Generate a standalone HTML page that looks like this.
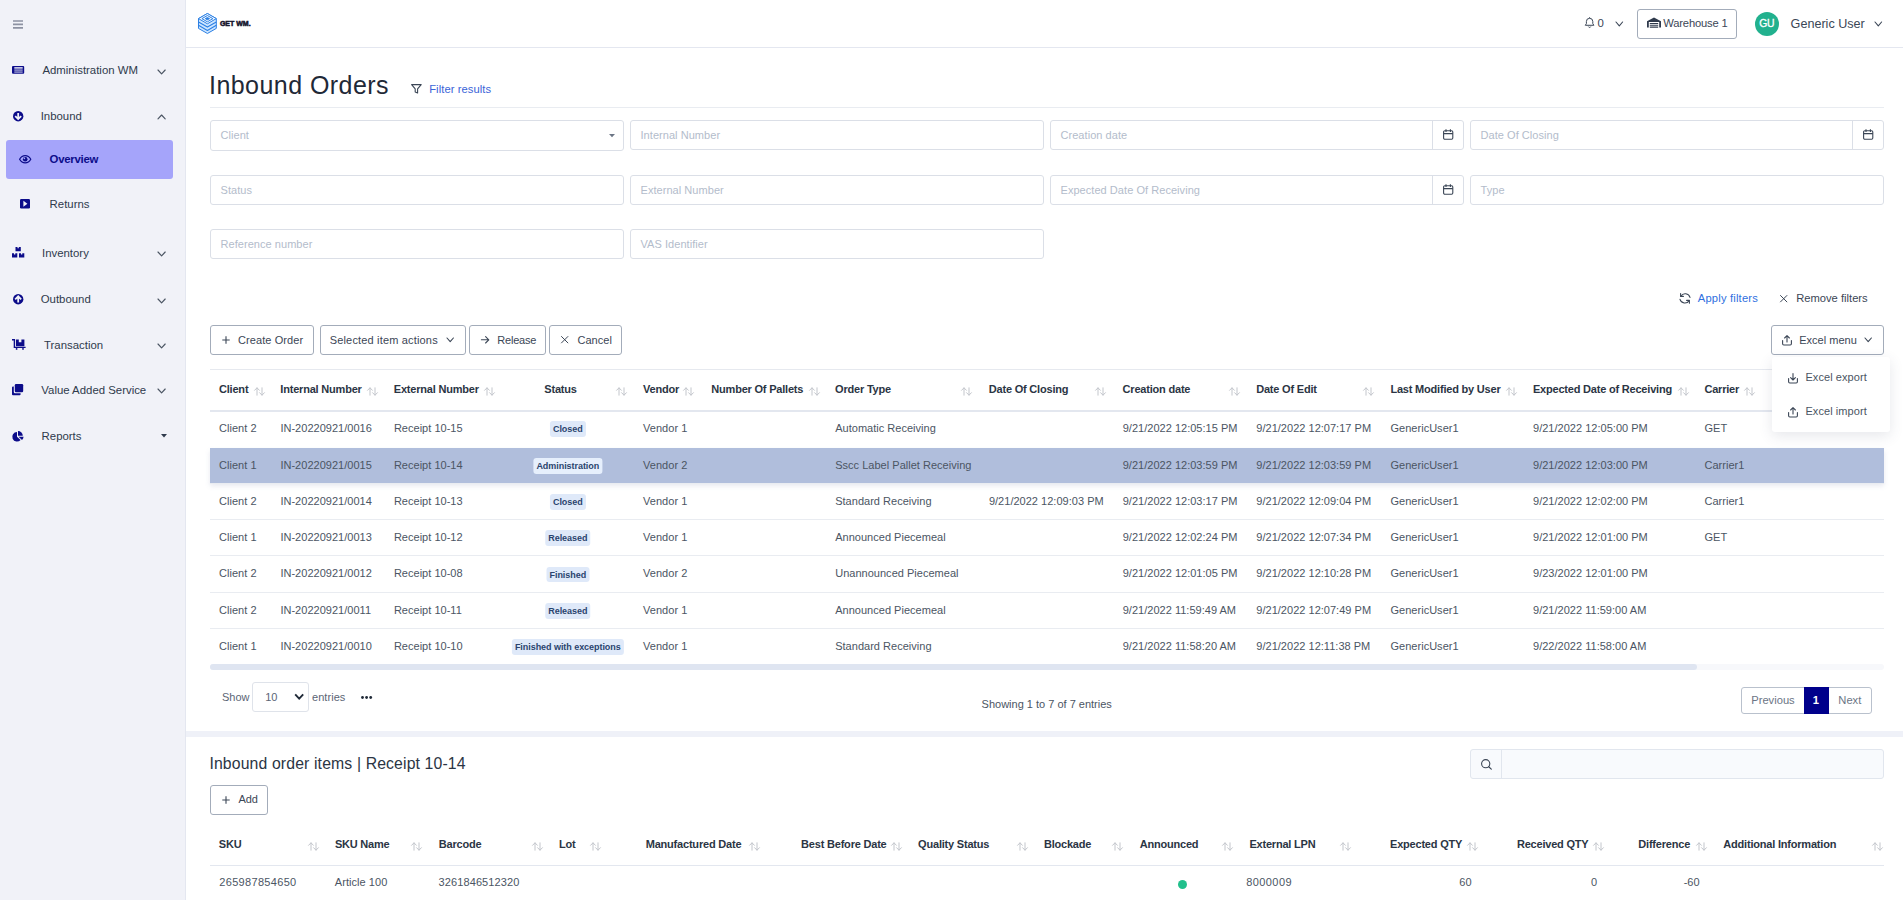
<!DOCTYPE html>
<html lang="en">
<head>
<meta charset="utf-8">
<title>Inbound Orders</title>
<style>
*{box-sizing:border-box;margin:0;padding:0}
html,body{width:1903px;height:900px;overflow:hidden;background:#fff}
body{font-family:"Liberation Sans",sans-serif;font-size:11px;color:#4b5563;position:relative}
.abs{position:absolute}
svg{display:block;overflow:visible}
.t{position:absolute;white-space:pre;line-height:1}
#side{position:absolute;left:0;top:0;width:186px;height:900px;background:#f1f2f8;border-right:1px solid #e4e7f0}
#pill{position:absolute;left:6px;top:140px;width:167px;height:39px;background:#a5a4fa;border-radius:3px}
#top{position:absolute;left:186px;top:0;width:1717px;height:48px;background:#fff;border-bottom:1px solid #e4e7f0}
.inp{position:absolute;border:1px solid #dbdfe7;border-radius:3px;background:#fff}
.inp .ph{position:absolute;left:9.5px;top:9.2px;font-size:11px;line-height:1;color:#b3bccb;white-space:pre;letter-spacing:0.05px}
.inp .cal{position:absolute;right:0;top:0;width:31px;height:28px;border-left:1px solid #dbdfe7}
.btn{position:absolute;border:1px solid #a3acba;border-radius:3px;background:#fff}
.bdg{position:absolute;transform:translateX(-50%);color:#2a446e;font-size:9px;font-weight:700;line-height:16.4px;height:15.5px;padding:0 3.2px;border-radius:3px;white-space:pre;letter-spacing:-0.05px}
</style>
</head>
<body>
<div id="side">
<svg class="abs" style="left:13.00px;top:20.00px;" width="10" height="9" viewBox="0 0 10 9"><g stroke="#8d92a2" stroke-width="1.7"><path d="M0 1 H10 M0 4.4 H10 M0 7.8 H10"/></g></svg>
<div id="pill"></div>
<span class="t" style="top:65.15px;font-size:11.4px;left:42.40px;color:#2f3a4c;">Administration WM</span>
<span class="t" style="top:111.15px;font-size:11.4px;left:40.70px;color:#2f3a4c;">Inbound</span>
<span class="t" style="top:198.85px;font-size:11.4px;left:49.60px;color:#2f3a4c;">Returns</span>
<span class="t" style="top:247.85px;font-size:11.4px;left:42.00px;color:#2f3a4c;">Inventory</span>
<span class="t" style="top:294.15px;font-size:11.4px;left:40.70px;color:#2f3a4c;">Outbound</span>
<span class="t" style="top:340.15px;font-size:11.4px;left:44.00px;color:#2f3a4c;">Transaction</span>
<span class="t" style="top:385.15px;font-size:11.4px;left:41.30px;color:#2f3a4c;">Value Added Service</span>
<span class="t" style="top:431.15px;font-size:11.4px;left:41.60px;color:#2f3a4c;">Reports</span>
<span class="t" style="top:153.65px;font-size:11.4px;left:49.60px;color:#0c0c8a;font-weight:700;letter-spacing:-0.28px;">Overview</span>
<svg class="abs" style="left:156.60px;top:68.50px;" width="9.2" height="5.9" viewBox="0 0 9.2 5.9"><path d="M1 1 L4.60 4.90 L8.20 1" fill="none" stroke="#4b5563" stroke-width="1.15" stroke-linecap="round" stroke-linejoin="round"/></svg>
<svg class="abs" style="left:156.60px;top:251.00px;" width="9.2" height="5.9" viewBox="0 0 9.2 5.9"><path d="M1 1 L4.60 4.90 L8.20 1" fill="none" stroke="#4b5563" stroke-width="1.15" stroke-linecap="round" stroke-linejoin="round"/></svg>
<svg class="abs" style="left:156.60px;top:297.50px;" width="9.2" height="5.9" viewBox="0 0 9.2 5.9"><path d="M1 1 L4.60 4.90 L8.20 1" fill="none" stroke="#4b5563" stroke-width="1.15" stroke-linecap="round" stroke-linejoin="round"/></svg>
<svg class="abs" style="left:156.60px;top:343.30px;" width="9.2" height="5.9" viewBox="0 0 9.2 5.9"><path d="M1 1 L4.60 4.90 L8.20 1" fill="none" stroke="#4b5563" stroke-width="1.15" stroke-linecap="round" stroke-linejoin="round"/></svg>
<svg class="abs" style="left:156.60px;top:388.10px;" width="9.2" height="5.9" viewBox="0 0 9.2 5.9"><path d="M1 1 L4.60 4.90 L8.20 1" fill="none" stroke="#4b5563" stroke-width="1.15" stroke-linecap="round" stroke-linejoin="round"/></svg>
<svg class="abs" style="left:156.60px;top:114.10px;" width="9.2" height="5.9" viewBox="0 0 9.2 5.9"><path d="M1 4.90 L4.60 1 L8.20 4.90" fill="none" stroke="#4b5563" stroke-width="1.15" stroke-linecap="round" stroke-linejoin="round"/></svg>
<svg class="abs" style="left:161.00px;top:434.30px;" width="6" height="3.5" viewBox="0 0 6 3.5"><path d="M0 0 H6 L3 3.5 Z" fill="#2f3a4c"/></svg>
<svg class="abs" style="left:12.20px;top:66.00px;" width="12.2" height="7.8" viewBox="0 0 12.2 7.8"><rect x="0" y="0" width="12.2" height="7.8" rx="1" fill="#0c0c8a"/><g fill="#f1f2f8"><rect x="2.3" y="1.2" width="8.4" height="1.4"/><rect x="2.3" y="3.6" width="8.4" height="0.9"/><rect x="2.3" y="5.6" width="8.4" height="0.9"/></g></svg>
<svg class="abs" style="left:12.50px;top:110.70px;" width="10.4" height="10.4" viewBox="0 0 10.4 10.4"><circle cx="5.2" cy="5.2" r="5.2" fill="#0c0c8a"/><path d="M5.2 2 V7.8 M2.2 5.1 L5.2 8.1 L8.2 5.1" fill="none" stroke="#f1f2f8" stroke-width="1.8" stroke-linejoin="miter"/></svg>
<svg class="abs" style="left:19.00px;top:154.80px;" width="12.4" height="8.4" viewBox="0 0 12.4 8.4"><path d="M0.6 4.2 C2.2 1.4 4 0.6 6.2 0.6 C8.4 0.6 10.2 1.4 11.8 4.2 C10.2 7 8.4 7.8 6.2 7.8 C4 7.8 2.2 7 0.6 4.2 Z" fill="none" stroke="#0c0c8a" stroke-width="1.2"/><circle cx="6.2" cy="4.2" r="2.3" fill="#0c0c8a"/><circle cx="5.4" cy="3.4" r="0.8" fill="#a5a4fa"/></svg>
<svg class="abs" style="left:20.00px;top:199.00px;" width="10" height="9.4" viewBox="0 0 10 9.4"><rect width="10" height="9.4" rx="1.2" fill="#0c0c8a"/><path d="M3.4 1.7 L7.4 4.7 L3.4 7.7 Z" fill="#f1f2f8"/></svg>
<svg class="abs" style="left:12.20px;top:247.40px;" width="12.4" height="10.6" viewBox="0 0 12.4 10.6"><path d="M3.5 0 H5.50 V1.30 H6.80 V0 H8.8 V4.2 H3.5 Z" fill="#0c0c8a"/><path d="M0 6.3 H2.00 V7.60 H3.30 V6.3 H5.3 V10.5 H0 Z" fill="#0c0c8a"/><path d="M7 6.3 H9.00 V7.60 H10.30 V6.3 H12.3 V10.5 H7 Z" fill="#0c0c8a"/></svg>
<svg class="abs" style="left:12.50px;top:293.50px;" width="10.4" height="10.4" viewBox="0 0 10.4 10.4"><circle cx="5.2" cy="5.2" r="5.2" fill="#0c0c8a"/><path d="M5.2 8.4 V2.6 M2.2 5.3 L5.2 2.3 L8.2 5.3" fill="none" stroke="#f1f2f8" stroke-width="1.8"/></svg>
<svg class="abs" style="left:12.30px;top:339.30px;" width="13.8" height="10.8" viewBox="0 0 13.8 10.8"><path d="M0 0.7 H2.4 V8.4 H13.6" fill="none" stroke="#0c0c8a" stroke-width="1.4"/><path d="M4 0.6 H6.8 V3.2 H9.4 V0.6 H12.4 V7.2 H4 Z" fill="#0c0c8a"/><circle cx="4.6" cy="9.9" r="0.9" fill="#0c0c8a"/><circle cx="11" cy="9.9" r="0.9" fill="#0c0c8a"/></svg>
<svg class="abs" style="left:12.00px;top:384.00px;" width="11.2" height="11.4" viewBox="0 0 11.2 11.4"><rect x="2.8" y="0" width="8.4" height="8.2" rx="1.2" fill="#0c0c8a"/><path d="M0 3.6 Q0 2.6 1 2.6 H1.8 V8 Q1.8 9.2 3 9.2 H8.6 V10.2 Q8.6 11.2 7.6 11.2 H1 Q0 11.2 0 10.2 Z" fill="#0c0c8a"/></svg>
<svg class="abs" style="left:12.00px;top:430.60px;" width="11.8" height="10.6" viewBox="0 0 11.8 10.6"><path d="M5 1 A4.8 4.8 0 1 0 8.6 9 L5 5.8 Z" fill="#0c0c8a"/><path d="M6 0 A4.8 4.8 0 0 1 10.8 4.8 H6 Z" fill="#0c0c8a"/><path d="M6.6 5.8 H11.6 A4.8 4.8 0 0 1 10 9 Z" fill="#0c0c8a"/></svg>
</div>
<div id="top"></div>
<svg class="abs" style="left:198.00px;top:13.00px;" width="18.8" height="21" viewBox="0 0 18.8 21"><g fill="none" stroke="#2b7fe4" stroke-width="1" stroke-linejoin="round"><path d="M9.4 0.5 L18.3 5.6 V15.4 L9.4 20.5 L0.5 15.4 V5.6 Z" fill="#cde6ff"/><path d="M9.4 0.5 L18.3 5.6 L9.4 10.8 L0.5 5.6 Z" fill="#f4faff"/><path d="M9.4 2.5 L14.9 5.65 L9.4 8.8 L3.9 5.65 Z"/><path d="M9.4 4.5 L11.5 5.65 L9.4 6.8 L7.3 5.65 Z" fill="#2b7fe4"/><path d="M0.5 9 L9.4 14.1 L18.3 9 M0.5 12.3 L9.4 17.4 L18.3 12.3" stroke-width="1.1"/></g></svg>
<span class="t" style="top:20.17px;font-size:7.0px;left:219.90px;color:#14142b;font-weight:700;letter-spacing:0.0px;-webkit-text-stroke:0.5px #14142b;">GET WM.</span>
<svg class="abs" style="left:1585.30px;top:17.40px;" width="9.2" height="11" viewBox="0 0 9.2 11"><path d="M4.6 1.3 A3.2 3.2 0 0 1 7.8 4.5 V6.6 L8.9 8.3 H0.3 L1.4 6.6 V4.5 A3.2 3.2 0 0 1 4.6 1.3 Z" fill="none" stroke="#3b4656" stroke-width="1"/><path d="M4.6 0.2 V1.3 M3.4 9.6 A1.3 1.3 0 0 0 5.8 9.6" fill="none" stroke="#3b4656" stroke-width="1"/></svg>
<span class="t" style="top:17.55px;font-size:11.4px;left:1597.60px;color:#3b4656;">0</span>
<svg class="abs" style="left:1614.80px;top:21.20px;" width="8.6" height="5.8" viewBox="0 0 8.6 5.8"><path d="M1 1 L4.30 4.80 L7.60 1" fill="none" stroke="#3b4656" stroke-width="1.1" stroke-linecap="round" stroke-linejoin="round"/></svg>
<div class="btn" style="left:1637px;top:9px;width:100px;height:30px"></div>
<svg class="abs" style="left:1647.00px;top:17.40px;" width="14" height="10.8" viewBox="0 0 14 10.8"><path d="M0 4.2 L7 0.6 L14 4.2 V10.6 H12.2 V5 H1.8 V10.6 H0 Z" fill="#2f3a4c"/><path d="M2.8 6.5 H11.2 M2.8 8.3 H11.2 M2.8 10.1 H11.2" stroke="#2f3a4c" stroke-width="1.1"/></svg>
<span class="t" style="top:17.72px;font-size:11.2px;left:1663.20px;color:#3b4656;letter-spacing:-0.15px;">Warehouse 1</span>
<div class="abs" style="left:1755px;top:12px;width:24px;height:24px;border-radius:12px;background:#22b18e"></div>
<span class="t" style="top:18.90px;font-size:10.4px;left:1759.30px;color:#fff;font-weight:400;letter-spacing:-0.3px;-webkit-text-stroke:0.3px #fff;">GU</span>
<span class="t" style="top:18.13px;font-size:12.6px;left:1790.60px;color:#3b4656;">Generic User</span>
<svg class="abs" style="left:1873.80px;top:21.20px;" width="8.6" height="5.8" viewBox="0 0 8.6 5.8"><path d="M1 1 L4.30 4.80 L7.60 1" fill="none" stroke="#3b4656" stroke-width="1.1" stroke-linecap="round" stroke-linejoin="round"/></svg>
<span class="t" style="top:73.24px;font-size:25px;left:209.00px;color:#1f2937;letter-spacing:0.45px;">Inbound Orders</span>
<svg class="abs" style="left:411.40px;top:84.20px;" width="10.8" height="9.8" viewBox="0 0 10.8 9.8"><path d="M0.6 0.6 H10.2 L6.6 4.9 V9 L4.2 8 V4.9 Z" fill="none" stroke="#3b4656" stroke-width="1.1" stroke-linejoin="round"/></svg>
<span class="t" style="top:83.72px;font-size:11.2px;left:429.20px;color:#3a64d8;letter-spacing:0.07px;">Filter results</span>
<div class="abs" style="left:210px;top:107px;width:1674px;height:1px;background:#e9ecf1"></div>
<div class="inp" style="left:210px;top:120px;width:414px;height:31px"><span class="ph">Client</span></div>
<svg class="abs" style="left:608.60px;top:134.00px;" width="6" height="3.2" viewBox="0 0 6 3.2"><path d="M0 0 H6 L3 3.2 Z" fill="#6b7585"/></svg>
<div class="inp" style="left:630px;top:120px;width:414px;height:30px"><span class="ph">Internal Number</span></div>
<div class="inp" style="left:1050px;top:120px;width:414px;height:30px"><span class="ph">Creation date</span><div class="cal"></div></div>
<svg class="abs" style="left:1442.80px;top:129.00px;" width="10.4" height="10.8" viewBox="0 0 10.4 10.8"><g fill="none" stroke="#3b4656" stroke-width="1.1"><rect x="0.6" y="1.8" width="9.2" height="8.4" rx="1.2"/><path d="M0.6 4.6 H9.8 M3 0.3 V3 M7.4 0.3 V3"/></g></svg>
<div class="inp" style="left:1470px;top:120px;width:414px;height:30px"><span class="ph">Date Of Closing</span><div class="cal"></div></div>
<svg class="abs" style="left:1862.80px;top:129.00px;" width="10.4" height="10.8" viewBox="0 0 10.4 10.8"><g fill="none" stroke="#3b4656" stroke-width="1.1"><rect x="0.6" y="1.8" width="9.2" height="8.4" rx="1.2"/><path d="M0.6 4.6 H9.8 M3 0.3 V3 M7.4 0.3 V3"/></g></svg>
<div class="inp" style="left:210px;top:175px;width:414px;height:30px"><span class="ph">Status</span></div>
<div class="inp" style="left:630px;top:175px;width:414px;height:30px"><span class="ph">External Number</span></div>
<div class="inp" style="left:1050px;top:175px;width:414px;height:30px"><span class="ph">Expected Date Of Receiving</span><div class="cal"></div></div>
<svg class="abs" style="left:1442.80px;top:184.00px;" width="10.4" height="10.8" viewBox="0 0 10.4 10.8"><g fill="none" stroke="#3b4656" stroke-width="1.1"><rect x="0.6" y="1.8" width="9.2" height="8.4" rx="1.2"/><path d="M0.6 4.6 H9.8 M3 0.3 V3 M7.4 0.3 V3"/></g></svg>
<div class="inp" style="left:1470px;top:175px;width:414px;height:30px"><span class="ph">Type</span></div>
<div class="inp" style="left:210px;top:229px;width:414px;height:30px"><span class="ph">Reference number</span></div>
<div class="inp" style="left:630px;top:229px;width:414px;height:30px"><span class="ph">VAS Identifier</span></div>
<svg class="abs" style="left:1679.00px;top:292.80px;" width="12" height="10.8" viewBox="0 0 12 10.8"><g fill="none" stroke="#3b4656" stroke-width="1.1" stroke-linecap="round" stroke-linejoin="round"><path d="M11 4.4 A5 5 0 0 0 1.9 3.2 M1 6.4 A5 5 0 0 0 10.1 7.6"/><path d="M1.6 0.6 V3.4 H4.4 M10.4 10.2 V7.4 H7.6"/></g></svg>
<span class="t" style="top:292.72px;font-size:11.2px;left:1697.80px;color:#2f6fe0;letter-spacing:0.18px;">Apply filters</span>
<svg class="abs" style="left:1780.40px;top:294.70px;" width="7.4" height="7.4" viewBox="0 0 7.4 7.4"><path d="M0.5 0.5 L6.9 6.9 M6.9 0.5 L0.5 6.9" stroke="#3b4656" stroke-width="1" stroke-linecap="round"/></svg>
<span class="t" style="top:292.72px;font-size:11.2px;left:1796.20px;color:#3b4656;letter-spacing:0.0px;">Remove filters</span>
<div class="btn" style="left:210px;top:325px;width:104px;height:30px"></div>
<svg class="abs" style="left:222.00px;top:336.00px;" width="8" height="8" viewBox="0 0 8 8"><path d="M4 0.3 V7.7 M0.3 4 H7.7" stroke="#3b4656" stroke-width="1.1"/></svg>
<span class="t" style="top:334.99px;font-size:11px;left:237.90px;color:#3b4656;letter-spacing:0.1px;">Create Order</span>
<div class="btn" style="left:320px;top:325px;width:146px;height:30px"></div>
<span class="t" style="top:334.99px;font-size:11px;left:329.70px;color:#3b4656;letter-spacing:0.17px;">Selected item actions</span>
<svg class="abs" style="left:445.70px;top:337.10px;" width="8.4" height="5.7" viewBox="0 0 8.4 5.7"><path d="M1 1 L4.20 4.70 L7.40 1" fill="none" stroke="#3b4656" stroke-width="1.1" stroke-linecap="round" stroke-linejoin="round"/></svg>
<div class="btn" style="left:469px;top:325px;width:77px;height:30px"></div>
<svg class="abs" style="left:481.00px;top:336.20px;" width="8.4" height="7.6" viewBox="0 0 8.4 7.6"><path d="M0.4 3.8 H7.8 M4.6 0.6 L7.8 3.8 L4.6 7" fill="none" stroke="#3b4656" stroke-width="1.1" stroke-linecap="round" stroke-linejoin="round"/></svg>
<span class="t" style="top:334.99px;font-size:11px;left:497.30px;color:#3b4656;letter-spacing:-0.2px;">Release</span>
<div class="btn" style="left:549px;top:325px;width:73px;height:30px"></div>
<svg class="abs" style="left:561.40px;top:336.30px;" width="7.4" height="7.4" viewBox="0 0 7.4 7.4"><path d="M0.5 0.5 L6.9 6.9 M6.9 0.5 L0.5 6.9" stroke="#3b4656" stroke-width="1" stroke-linecap="round"/></svg>
<span class="t" style="top:334.99px;font-size:11px;left:577.50px;color:#3b4656;letter-spacing:0.03px;">Cancel</span>
<div class="abs" style="left:210px;top:369px;width:1674px;height:1px;background:#e6e9ef"></div>
<div class="abs" style="left:210px;top:410px;width:1674px;height:2px;background:#e3e7ef"></div>
<span class="t" style="top:383.89px;font-size:11px;left:219.00px;color:#2b3544;font-weight:700;letter-spacing:-0.2px;">Client</span>
<svg class="abs" style="left:253.60px;top:386.60px;" width="11" height="9" viewBox="0 0 11 9"><g fill="none" stroke="#c3c6cc" stroke-width="1" stroke-linecap="round" stroke-linejoin="round"><path d="M3 8.2 V0.9 M0.6 3.3 L3 0.8 L5.4 3.3"/><path d="M8 0.8 V8.1 M5.6 5.7 L8 8.2 L10.4 5.7"/></g></svg>
<span class="t" style="top:383.89px;font-size:11px;left:280.30px;color:#2b3544;font-weight:700;letter-spacing:-0.2px;">Internal Number</span>
<svg class="abs" style="left:367.20px;top:386.60px;" width="11" height="9" viewBox="0 0 11 9"><g fill="none" stroke="#c3c6cc" stroke-width="1" stroke-linecap="round" stroke-linejoin="round"><path d="M3 8.2 V0.9 M0.6 3.3 L3 0.8 L5.4 3.3"/><path d="M8 0.8 V8.1 M5.6 5.7 L8 8.2 L10.4 5.7"/></g></svg>
<span class="t" style="top:383.89px;font-size:11px;left:393.80px;color:#2b3544;font-weight:700;letter-spacing:-0.2px;">External Number</span>
<svg class="abs" style="left:483.60px;top:386.60px;" width="11" height="9" viewBox="0 0 11 9"><g fill="none" stroke="#c3c6cc" stroke-width="1" stroke-linecap="round" stroke-linejoin="round"><path d="M3 8.2 V0.9 M0.6 3.3 L3 0.8 L5.4 3.3"/><path d="M8 0.8 V8.1 M5.6 5.7 L8 8.2 L10.4 5.7"/></g></svg>
<span class="t" style="top:383.89px;font-size:11px;left:544.30px;color:#2b3544;font-weight:700;letter-spacing:-0.2px;">Status</span>
<svg class="abs" style="left:615.80px;top:386.60px;" width="11" height="9" viewBox="0 0 11 9"><g fill="none" stroke="#c3c6cc" stroke-width="1" stroke-linecap="round" stroke-linejoin="round"><path d="M3 8.2 V0.9 M0.6 3.3 L3 0.8 L5.4 3.3"/><path d="M8 0.8 V8.1 M5.6 5.7 L8 8.2 L10.4 5.7"/></g></svg>
<span class="t" style="top:383.89px;font-size:11px;left:643.00px;color:#2b3544;font-weight:700;letter-spacing:-0.2px;">Vendor</span>
<svg class="abs" style="left:683.20px;top:386.60px;" width="11" height="9" viewBox="0 0 11 9"><g fill="none" stroke="#c3c6cc" stroke-width="1" stroke-linecap="round" stroke-linejoin="round"><path d="M3 8.2 V0.9 M0.6 3.3 L3 0.8 L5.4 3.3"/><path d="M8 0.8 V8.1 M5.6 5.7 L8 8.2 L10.4 5.7"/></g></svg>
<span class="t" style="top:383.89px;font-size:11px;left:711.30px;color:#2b3544;font-weight:700;letter-spacing:-0.2px;">Number Of Pallets</span>
<svg class="abs" style="left:808.60px;top:386.60px;" width="11" height="9" viewBox="0 0 11 9"><g fill="none" stroke="#c3c6cc" stroke-width="1" stroke-linecap="round" stroke-linejoin="round"><path d="M3 8.2 V0.9 M0.6 3.3 L3 0.8 L5.4 3.3"/><path d="M8 0.8 V8.1 M5.6 5.7 L8 8.2 L10.4 5.7"/></g></svg>
<span class="t" style="top:383.89px;font-size:11px;left:835.10px;color:#2b3544;font-weight:700;letter-spacing:-0.2px;">Order Type</span>
<svg class="abs" style="left:961.20px;top:386.60px;" width="11" height="9" viewBox="0 0 11 9"><g fill="none" stroke="#c3c6cc" stroke-width="1" stroke-linecap="round" stroke-linejoin="round"><path d="M3 8.2 V0.9 M0.6 3.3 L3 0.8 L5.4 3.3"/><path d="M8 0.8 V8.1 M5.6 5.7 L8 8.2 L10.4 5.7"/></g></svg>
<span class="t" style="top:383.89px;font-size:11px;left:988.80px;color:#2b3544;font-weight:700;letter-spacing:-0.2px;">Date Of Closing</span>
<svg class="abs" style="left:1095.20px;top:386.60px;" width="11" height="9" viewBox="0 0 11 9"><g fill="none" stroke="#c3c6cc" stroke-width="1" stroke-linecap="round" stroke-linejoin="round"><path d="M3 8.2 V0.9 M0.6 3.3 L3 0.8 L5.4 3.3"/><path d="M8 0.8 V8.1 M5.6 5.7 L8 8.2 L10.4 5.7"/></g></svg>
<span class="t" style="top:383.89px;font-size:11px;left:1122.60px;color:#2b3544;font-weight:700;letter-spacing:-0.2px;">Creation date</span>
<svg class="abs" style="left:1228.80px;top:386.60px;" width="11" height="9" viewBox="0 0 11 9"><g fill="none" stroke="#c3c6cc" stroke-width="1" stroke-linecap="round" stroke-linejoin="round"><path d="M3 8.2 V0.9 M0.6 3.3 L3 0.8 L5.4 3.3"/><path d="M8 0.8 V8.1 M5.6 5.7 L8 8.2 L10.4 5.7"/></g></svg>
<span class="t" style="top:383.89px;font-size:11px;left:1256.20px;color:#2b3544;font-weight:700;letter-spacing:-0.2px;">Date Of Edit</span>
<svg class="abs" style="left:1362.60px;top:386.60px;" width="11" height="9" viewBox="0 0 11 9"><g fill="none" stroke="#c3c6cc" stroke-width="1" stroke-linecap="round" stroke-linejoin="round"><path d="M3 8.2 V0.9 M0.6 3.3 L3 0.8 L5.4 3.3"/><path d="M8 0.8 V8.1 M5.6 5.7 L8 8.2 L10.4 5.7"/></g></svg>
<span class="t" style="top:383.89px;font-size:11px;left:1390.40px;color:#2b3544;font-weight:700;letter-spacing:-0.2px;">Last Modified by User</span>
<svg class="abs" style="left:1506.00px;top:386.60px;" width="11" height="9" viewBox="0 0 11 9"><g fill="none" stroke="#c3c6cc" stroke-width="1" stroke-linecap="round" stroke-linejoin="round"><path d="M3 8.2 V0.9 M0.6 3.3 L3 0.8 L5.4 3.3"/><path d="M8 0.8 V8.1 M5.6 5.7 L8 8.2 L10.4 5.7"/></g></svg>
<span class="t" style="top:383.89px;font-size:11px;left:1532.90px;color:#2b3544;font-weight:700;letter-spacing:-0.2px;">Expected Date of Receiving</span>
<svg class="abs" style="left:1677.60px;top:386.60px;" width="11" height="9" viewBox="0 0 11 9"><g fill="none" stroke="#c3c6cc" stroke-width="1" stroke-linecap="round" stroke-linejoin="round"><path d="M3 8.2 V0.9 M0.6 3.3 L3 0.8 L5.4 3.3"/><path d="M8 0.8 V8.1 M5.6 5.7 L8 8.2 L10.4 5.7"/></g></svg>
<span class="t" style="top:383.89px;font-size:11px;left:1704.40px;color:#2b3544;font-weight:700;letter-spacing:-0.2px;">Carrier</span>
<svg class="abs" style="left:1743.60px;top:386.60px;" width="11" height="9" viewBox="0 0 11 9"><g fill="none" stroke="#c3c6cc" stroke-width="1" stroke-linecap="round" stroke-linejoin="round"><path d="M3 8.2 V0.9 M0.6 3.3 L3 0.8 L5.4 3.3"/><path d="M8 0.8 V8.1 M5.6 5.7 L8 8.2 L10.4 5.7"/></g></svg>
<span class="t" style="top:422.99px;font-size:11px;left:219.10px;color:#4b5563;letter-spacing:0.02px;">Client 2</span>
<span class="t" style="top:422.99px;font-size:11px;left:280.40px;color:#4b5563;letter-spacing:0.02px;">IN-20220921/0016</span>
<span class="t" style="top:422.99px;font-size:11px;left:393.90px;color:#4b5563;letter-spacing:0.02px;">Receipt 10-15</span>
<span class="bdg" style="left:567.8px;top:421.40px;background:#dfe9f9">Closed</span>
<span class="t" style="top:422.99px;font-size:11px;left:643.10px;color:#4b5563;letter-spacing:0.02px;">Vendor 1</span>
<span class="t" style="top:422.99px;font-size:11px;left:835.20px;color:#4b5563;letter-spacing:0.02px;">Automatic Receiving</span>
<span class="t" style="top:422.99px;font-size:11px;left:1122.70px;color:#4b5563;letter-spacing:0.02px;">9/21/2022 12:05:15 PM</span>
<span class="t" style="top:422.99px;font-size:11px;left:1256.30px;color:#4b5563;letter-spacing:0.02px;">9/21/2022 12:07:17 PM</span>
<span class="t" style="top:422.99px;font-size:11px;left:1390.50px;color:#4b5563;letter-spacing:0.02px;">GenericUser1</span>
<span class="t" style="top:422.99px;font-size:11px;left:1533.00px;color:#4b5563;letter-spacing:0.02px;">9/21/2022 12:05:00 PM</span>
<span class="t" style="top:422.99px;font-size:11px;left:1704.50px;color:#4b5563;letter-spacing:0.02px;">GET</span>
<div class="abs" style="left:210px;top:447.5px;width:1674px;height:35.5px;background:#b0bedc;box-shadow:0 3px 5px rgba(120,135,170,0.18)"></div>
<span class="t" style="top:459.69px;font-size:11px;left:219.10px;color:#4b5563;letter-spacing:0.02px;">Client 1</span>
<span class="t" style="top:459.69px;font-size:11px;left:280.40px;color:#4b5563;letter-spacing:0.02px;">IN-20220921/0015</span>
<span class="t" style="top:459.69px;font-size:11px;left:393.90px;color:#4b5563;letter-spacing:0.02px;">Receipt 10-14</span>
<span class="bdg" style="left:567.8px;top:458.10px;background:#e6effc">Administration</span>
<span class="t" style="top:459.69px;font-size:11px;left:643.10px;color:#4b5563;letter-spacing:0.02px;">Vendor 2</span>
<span class="t" style="top:459.69px;font-size:11px;left:835.20px;color:#4b5563;letter-spacing:0.02px;">Sscc Label Pallet Receiving</span>
<span class="t" style="top:459.69px;font-size:11px;left:1122.70px;color:#4b5563;letter-spacing:0.02px;">9/21/2022 12:03:59 PM</span>
<span class="t" style="top:459.69px;font-size:11px;left:1256.30px;color:#4b5563;letter-spacing:0.02px;">9/21/2022 12:03:59 PM</span>
<span class="t" style="top:459.69px;font-size:11px;left:1390.50px;color:#4b5563;letter-spacing:0.02px;">GenericUser1</span>
<span class="t" style="top:459.69px;font-size:11px;left:1533.00px;color:#4b5563;letter-spacing:0.02px;">9/21/2022 12:03:00 PM</span>
<span class="t" style="top:459.69px;font-size:11px;left:1704.50px;color:#4b5563;letter-spacing:0.02px;">Carrier1</span>
<div class="abs" style="left:210px;top:482.50px;width:1674px;height:1px;background:#e9ecf1"></div>
<span class="t" style="top:495.89px;font-size:11px;left:219.10px;color:#4b5563;letter-spacing:0.02px;">Client 2</span>
<span class="t" style="top:495.89px;font-size:11px;left:280.40px;color:#4b5563;letter-spacing:0.02px;">IN-20220921/0014</span>
<span class="t" style="top:495.89px;font-size:11px;left:393.90px;color:#4b5563;letter-spacing:0.02px;">Receipt 10-13</span>
<span class="bdg" style="left:567.8px;top:494.30px;background:#dfe9f9">Closed</span>
<span class="t" style="top:495.89px;font-size:11px;left:643.10px;color:#4b5563;letter-spacing:0.02px;">Vendor 1</span>
<span class="t" style="top:495.89px;font-size:11px;left:835.20px;color:#4b5563;letter-spacing:0.02px;">Standard Receiving</span>
<span class="t" style="top:495.89px;font-size:11px;left:988.90px;color:#4b5563;letter-spacing:0.02px;">9/21/2022 12:09:03 PM</span>
<span class="t" style="top:495.89px;font-size:11px;left:1122.70px;color:#4b5563;letter-spacing:0.02px;">9/21/2022 12:03:17 PM</span>
<span class="t" style="top:495.89px;font-size:11px;left:1256.30px;color:#4b5563;letter-spacing:0.02px;">9/21/2022 12:09:04 PM</span>
<span class="t" style="top:495.89px;font-size:11px;left:1390.50px;color:#4b5563;letter-spacing:0.02px;">GenericUser1</span>
<span class="t" style="top:495.89px;font-size:11px;left:1533.00px;color:#4b5563;letter-spacing:0.02px;">9/21/2022 12:02:00 PM</span>
<span class="t" style="top:495.89px;font-size:11px;left:1704.50px;color:#4b5563;letter-spacing:0.02px;">Carrier1</span>
<div class="abs" style="left:210px;top:518.90px;width:1674px;height:1px;background:#e9ecf1"></div>
<span class="t" style="top:531.89px;font-size:11px;left:219.10px;color:#4b5563;letter-spacing:0.02px;">Client 1</span>
<span class="t" style="top:531.89px;font-size:11px;left:280.40px;color:#4b5563;letter-spacing:0.02px;">IN-20220921/0013</span>
<span class="t" style="top:531.89px;font-size:11px;left:393.90px;color:#4b5563;letter-spacing:0.02px;">Receipt 10-12</span>
<span class="bdg" style="left:567.8px;top:530.30px;background:#dfe9f9">Released</span>
<span class="t" style="top:531.89px;font-size:11px;left:643.10px;color:#4b5563;letter-spacing:0.02px;">Vendor 1</span>
<span class="t" style="top:531.89px;font-size:11px;left:835.20px;color:#4b5563;letter-spacing:0.02px;">Announced Piecemeal</span>
<span class="t" style="top:531.89px;font-size:11px;left:1122.70px;color:#4b5563;letter-spacing:0.02px;">9/21/2022 12:02:24 PM</span>
<span class="t" style="top:531.89px;font-size:11px;left:1256.30px;color:#4b5563;letter-spacing:0.02px;">9/21/2022 12:07:34 PM</span>
<span class="t" style="top:531.89px;font-size:11px;left:1390.50px;color:#4b5563;letter-spacing:0.02px;">GenericUser1</span>
<span class="t" style="top:531.89px;font-size:11px;left:1533.00px;color:#4b5563;letter-spacing:0.02px;">9/21/2022 12:01:00 PM</span>
<span class="t" style="top:531.89px;font-size:11px;left:1704.50px;color:#4b5563;letter-spacing:0.02px;">GET</span>
<div class="abs" style="left:210px;top:555.30px;width:1674px;height:1px;background:#e9ecf1"></div>
<span class="t" style="top:568.09px;font-size:11px;left:219.10px;color:#4b5563;letter-spacing:0.02px;">Client 2</span>
<span class="t" style="top:568.09px;font-size:11px;left:280.40px;color:#4b5563;letter-spacing:0.02px;">IN-20220921/0012</span>
<span class="t" style="top:568.09px;font-size:11px;left:393.90px;color:#4b5563;letter-spacing:0.02px;">Receipt 10-08</span>
<span class="bdg" style="left:567.8px;top:566.50px;background:#dfe9f9">Finished</span>
<span class="t" style="top:568.09px;font-size:11px;left:643.10px;color:#4b5563;letter-spacing:0.02px;">Vendor 2</span>
<span class="t" style="top:568.09px;font-size:11px;left:835.20px;color:#4b5563;letter-spacing:0.02px;">Unannounced Piecemeal</span>
<span class="t" style="top:568.09px;font-size:11px;left:1122.70px;color:#4b5563;letter-spacing:0.02px;">9/21/2022 12:01:05 PM</span>
<span class="t" style="top:568.09px;font-size:11px;left:1256.30px;color:#4b5563;letter-spacing:0.02px;">9/21/2022 12:10:28 PM</span>
<span class="t" style="top:568.09px;font-size:11px;left:1390.50px;color:#4b5563;letter-spacing:0.02px;">GenericUser1</span>
<span class="t" style="top:568.09px;font-size:11px;left:1533.00px;color:#4b5563;letter-spacing:0.02px;">9/23/2022 12:01:00 PM</span>
<div class="abs" style="left:210px;top:591.70px;width:1674px;height:1px;background:#e9ecf1"></div>
<span class="t" style="top:604.69px;font-size:11px;left:219.10px;color:#4b5563;letter-spacing:0.02px;">Client 2</span>
<span class="t" style="top:604.69px;font-size:11px;left:280.40px;color:#4b5563;letter-spacing:0.02px;">IN-20220921/0011</span>
<span class="t" style="top:604.69px;font-size:11px;left:393.90px;color:#4b5563;letter-spacing:0.02px;">Receipt 10-11</span>
<span class="bdg" style="left:567.8px;top:603.10px;background:#dfe9f9">Released</span>
<span class="t" style="top:604.69px;font-size:11px;left:643.10px;color:#4b5563;letter-spacing:0.02px;">Vendor 1</span>
<span class="t" style="top:604.69px;font-size:11px;left:835.20px;color:#4b5563;letter-spacing:0.02px;">Announced Piecemeal</span>
<span class="t" style="top:604.69px;font-size:11px;left:1122.70px;color:#4b5563;letter-spacing:0.02px;">9/21/2022 11:59:49 AM</span>
<span class="t" style="top:604.69px;font-size:11px;left:1256.30px;color:#4b5563;letter-spacing:0.02px;">9/21/2022 12:07:49 PM</span>
<span class="t" style="top:604.69px;font-size:11px;left:1390.50px;color:#4b5563;letter-spacing:0.02px;">GenericUser1</span>
<span class="t" style="top:604.69px;font-size:11px;left:1533.00px;color:#4b5563;letter-spacing:0.02px;">9/21/2022 11:59:00 AM</span>
<div class="abs" style="left:210px;top:628.10px;width:1674px;height:1px;background:#e9ecf1"></div>
<span class="t" style="top:640.89px;font-size:11px;left:219.10px;color:#4b5563;letter-spacing:0.02px;">Client 1</span>
<span class="t" style="top:640.89px;font-size:11px;left:280.40px;color:#4b5563;letter-spacing:0.02px;">IN-20220921/0010</span>
<span class="t" style="top:640.89px;font-size:11px;left:393.90px;color:#4b5563;letter-spacing:0.02px;">Receipt 10-10</span>
<span class="bdg" style="left:567.8px;top:639.30px;background:#dfe9f9">Finished with exceptions</span>
<span class="t" style="top:640.89px;font-size:11px;left:643.10px;color:#4b5563;letter-spacing:0.02px;">Vendor 1</span>
<span class="t" style="top:640.89px;font-size:11px;left:835.20px;color:#4b5563;letter-spacing:0.02px;">Standard Receiving</span>
<span class="t" style="top:640.89px;font-size:11px;left:1122.70px;color:#4b5563;letter-spacing:0.02px;">9/21/2022 11:58:20 AM</span>
<span class="t" style="top:640.89px;font-size:11px;left:1256.30px;color:#4b5563;letter-spacing:0.02px;">9/21/2022 12:11:38 PM</span>
<span class="t" style="top:640.89px;font-size:11px;left:1390.50px;color:#4b5563;letter-spacing:0.02px;">GenericUser1</span>
<span class="t" style="top:640.89px;font-size:11px;left:1533.00px;color:#4b5563;letter-spacing:0.02px;">9/22/2022 11:58:00 AM</span>
<div class="abs" style="left:210px;top:664px;width:1674px;height:6px;background:#f7f8fb;border-radius:3px"></div>
<div class="abs" style="left:210px;top:664px;width:1487px;height:6px;background:#dfe5f1;border-radius:3px"></div>
<span class="t" style="top:691.59px;font-size:11px;left:222.00px;color:#5b6575;letter-spacing:0.0px;">Show</span>
<div class="abs" style="left:252px;top:682px;width:57px;height:30px;border:1px solid #dfe3ea;border-radius:3px;background:#fff"></div>
<span class="t" style="top:691.59px;font-size:11px;left:265.20px;color:#5b6575;">10</span>
<svg class="abs" style="left:293.50px;top:693.00px;" width="10.4" height="8.4" viewBox="0 0 10.4 8.4"><path d="M1.2 1.4 L5.2 5.6 L9.2 1.4" fill="none" stroke="#1f2937" stroke-width="1.9"/></svg>
<span class="t" style="top:691.59px;font-size:11px;left:312.00px;color:#5b6575;letter-spacing:0.05px;">entries</span>
<svg class="abs" style="left:360.80px;top:696.40px;" width="11.4" height="3" viewBox="0 0 11.4 3"><circle cx="1.5" cy="1.5" r="1.4" fill="#1f2937"/><circle cx="5.6" cy="1.5" r="1.4" fill="#1f2937"/><circle cx="9.7" cy="1.5" r="1.4" fill="#1f2937"/></svg>
<span class="t" style="top:699.09px;font-size:11px;left:981.60px;color:#4b5563;letter-spacing:0.0px;">Showing 1 to 7 of 7 entries</span>
<div class="abs" style="left:1741px;top:687px;width:131px;height:27px;border:1px solid #b9c1cd;border-radius:3px;background:#fff"></div>
<div class="abs" style="left:1804px;top:687px;width:25px;height:27px;background:#00008b"></div>
<span class="t" style="top:694.52px;font-size:11.2px;left:1751.20px;color:#6b7585;letter-spacing:0.0px;">Previous</span>
<span class="t" style="top:694.52px;font-size:11.2px;left:1812.80px;color:#fff;font-weight:700;">1</span>
<span class="t" style="top:694.52px;font-size:11.2px;left:1838.30px;color:#6b7585;letter-spacing:0.0px;">Next</span>
<div class="abs" style="left:186px;top:731px;width:1717px;height:6px;background:#eff1f8"></div>
<span class="t" style="top:755.63px;font-size:15.8px;left:209.40px;color:#2b3544;letter-spacing:0.13px;">Inbound order items | Receipt 10-14</span>
<div class="abs" style="left:1470px;top:749px;width:414px;height:30px;border:1px solid #e1e6ee;border-radius:3px;background:#f8fafd"></div>
<div class="abs" style="left:1501px;top:750px;width:1px;height:28px;background:#e1e6ee"></div>
<svg class="abs" style="left:1480.80px;top:759.00px;" width="11" height="10.6" viewBox="0 0 11 10.6"><circle cx="4.7" cy="4.7" r="4.1" fill="none" stroke="#3b4656" stroke-width="1.1"/><path d="M7.7 7.7 L10.3 10.1" stroke="#3b4656" stroke-width="1.2" stroke-linecap="round"/></svg>
<div class="btn" style="left:210px;top:785px;width:58px;height:30px"></div>
<svg class="abs" style="left:222.00px;top:796.00px;" width="8" height="8" viewBox="0 0 8 8"><path d="M4 0.3 V7.7 M0.3 4 H7.7" stroke="#3b4656" stroke-width="1.1"/></svg>
<span class="t" style="top:793.79px;font-size:11px;left:238.40px;color:#3b4656;letter-spacing:0.0px;">Add</span>
<span class="t" style="top:838.69px;font-size:11px;left:218.80px;color:#2b3544;font-weight:700;letter-spacing:-0.2px;">SKU</span>
<svg class="abs" style="left:307.60px;top:842.40px;" width="11" height="9" viewBox="0 0 11 9"><g fill="none" stroke="#c3c6cc" stroke-width="1" stroke-linecap="round" stroke-linejoin="round"><path d="M3 8.2 V0.9 M0.6 3.3 L3 0.8 L5.4 3.3"/><path d="M8 0.8 V8.1 M5.6 5.7 L8 8.2 L10.4 5.7"/></g></svg>
<span class="t" style="top:838.69px;font-size:11px;left:334.90px;color:#2b3544;font-weight:700;letter-spacing:-0.2px;">SKU Name</span>
<svg class="abs" style="left:411.40px;top:842.40px;" width="11" height="9" viewBox="0 0 11 9"><g fill="none" stroke="#c3c6cc" stroke-width="1" stroke-linecap="round" stroke-linejoin="round"><path d="M3 8.2 V0.9 M0.6 3.3 L3 0.8 L5.4 3.3"/><path d="M8 0.8 V8.1 M5.6 5.7 L8 8.2 L10.4 5.7"/></g></svg>
<span class="t" style="top:838.69px;font-size:11px;left:438.80px;color:#2b3544;font-weight:700;letter-spacing:-0.2px;">Barcode</span>
<svg class="abs" style="left:532.00px;top:842.40px;" width="11" height="9" viewBox="0 0 11 9"><g fill="none" stroke="#c3c6cc" stroke-width="1" stroke-linecap="round" stroke-linejoin="round"><path d="M3 8.2 V0.9 M0.6 3.3 L3 0.8 L5.4 3.3"/><path d="M8 0.8 V8.1 M5.6 5.7 L8 8.2 L10.4 5.7"/></g></svg>
<span class="t" style="top:838.69px;font-size:11px;left:558.90px;color:#2b3544;font-weight:700;letter-spacing:-0.2px;">Lot</span>
<svg class="abs" style="left:590.00px;top:842.40px;" width="11" height="9" viewBox="0 0 11 9"><g fill="none" stroke="#c3c6cc" stroke-width="1" stroke-linecap="round" stroke-linejoin="round"><path d="M3 8.2 V0.9 M0.6 3.3 L3 0.8 L5.4 3.3"/><path d="M8 0.8 V8.1 M5.6 5.7 L8 8.2 L10.4 5.7"/></g></svg>
<span class="t" style="top:838.69px;font-size:11px;left:645.70px;color:#2b3544;font-weight:700;letter-spacing:-0.2px;">Manufactured Date</span>
<svg class="abs" style="left:748.60px;top:842.40px;" width="11" height="9" viewBox="0 0 11 9"><g fill="none" stroke="#c3c6cc" stroke-width="1" stroke-linecap="round" stroke-linejoin="round"><path d="M3 8.2 V0.9 M0.6 3.3 L3 0.8 L5.4 3.3"/><path d="M8 0.8 V8.1 M5.6 5.7 L8 8.2 L10.4 5.7"/></g></svg>
<span class="t" style="top:838.69px;font-size:11px;left:801.10px;color:#2b3544;font-weight:700;letter-spacing:-0.2px;">Best Before Date</span>
<svg class="abs" style="left:891.00px;top:842.40px;" width="11" height="9" viewBox="0 0 11 9"><g fill="none" stroke="#c3c6cc" stroke-width="1" stroke-linecap="round" stroke-linejoin="round"><path d="M3 8.2 V0.9 M0.6 3.3 L3 0.8 L5.4 3.3"/><path d="M8 0.8 V8.1 M5.6 5.7 L8 8.2 L10.4 5.7"/></g></svg>
<span class="t" style="top:838.69px;font-size:11px;left:918.10px;color:#2b3544;font-weight:700;letter-spacing:-0.2px;">Quality Status</span>
<svg class="abs" style="left:1016.80px;top:842.40px;" width="11" height="9" viewBox="0 0 11 9"><g fill="none" stroke="#c3c6cc" stroke-width="1" stroke-linecap="round" stroke-linejoin="round"><path d="M3 8.2 V0.9 M0.6 3.3 L3 0.8 L5.4 3.3"/><path d="M8 0.8 V8.1 M5.6 5.7 L8 8.2 L10.4 5.7"/></g></svg>
<span class="t" style="top:838.69px;font-size:11px;left:1043.90px;color:#2b3544;font-weight:700;letter-spacing:-0.2px;">Blockade</span>
<svg class="abs" style="left:1112.40px;top:842.40px;" width="11" height="9" viewBox="0 0 11 9"><g fill="none" stroke="#c3c6cc" stroke-width="1" stroke-linecap="round" stroke-linejoin="round"><path d="M3 8.2 V0.9 M0.6 3.3 L3 0.8 L5.4 3.3"/><path d="M8 0.8 V8.1 M5.6 5.7 L8 8.2 L10.4 5.7"/></g></svg>
<span class="t" style="top:838.69px;font-size:11px;left:1139.70px;color:#2b3544;font-weight:700;letter-spacing:-0.2px;">Announced</span>
<svg class="abs" style="left:1222.40px;top:842.40px;" width="11" height="9" viewBox="0 0 11 9"><g fill="none" stroke="#c3c6cc" stroke-width="1" stroke-linecap="round" stroke-linejoin="round"><path d="M3 8.2 V0.9 M0.6 3.3 L3 0.8 L5.4 3.3"/><path d="M8 0.8 V8.1 M5.6 5.7 L8 8.2 L10.4 5.7"/></g></svg>
<span class="t" style="top:838.69px;font-size:11px;left:1249.40px;color:#2b3544;font-weight:700;letter-spacing:-0.2px;">External LPN</span>
<svg class="abs" style="left:1339.80px;top:842.40px;" width="11" height="9" viewBox="0 0 11 9"><g fill="none" stroke="#c3c6cc" stroke-width="1" stroke-linecap="round" stroke-linejoin="round"><path d="M3 8.2 V0.9 M0.6 3.3 L3 0.8 L5.4 3.3"/><path d="M8 0.8 V8.1 M5.6 5.7 L8 8.2 L10.4 5.7"/></g></svg>
<span class="t" style="top:838.69px;font-size:11px;left:1390.00px;color:#2b3544;font-weight:700;letter-spacing:-0.2px;">Expected QTY</span>
<svg class="abs" style="left:1467.20px;top:842.40px;" width="11" height="9" viewBox="0 0 11 9"><g fill="none" stroke="#c3c6cc" stroke-width="1" stroke-linecap="round" stroke-linejoin="round"><path d="M3 8.2 V0.9 M0.6 3.3 L3 0.8 L5.4 3.3"/><path d="M8 0.8 V8.1 M5.6 5.7 L8 8.2 L10.4 5.7"/></g></svg>
<span class="t" style="top:838.69px;font-size:11px;left:1516.90px;color:#2b3544;font-weight:700;letter-spacing:-0.2px;">Received QTY</span>
<svg class="abs" style="left:1592.80px;top:842.40px;" width="11" height="9" viewBox="0 0 11 9"><g fill="none" stroke="#c3c6cc" stroke-width="1" stroke-linecap="round" stroke-linejoin="round"><path d="M3 8.2 V0.9 M0.6 3.3 L3 0.8 L5.4 3.3"/><path d="M8 0.8 V8.1 M5.6 5.7 L8 8.2 L10.4 5.7"/></g></svg>
<span class="t" style="top:838.69px;font-size:11px;left:1638.30px;color:#2b3544;font-weight:700;letter-spacing:-0.2px;">Difference</span>
<svg class="abs" style="left:1696.20px;top:842.40px;" width="11" height="9" viewBox="0 0 11 9"><g fill="none" stroke="#c3c6cc" stroke-width="1" stroke-linecap="round" stroke-linejoin="round"><path d="M3 8.2 V0.9 M0.6 3.3 L3 0.8 L5.4 3.3"/><path d="M8 0.8 V8.1 M5.6 5.7 L8 8.2 L10.4 5.7"/></g></svg>
<span class="t" style="top:838.69px;font-size:11px;left:1723.30px;color:#2b3544;font-weight:700;letter-spacing:-0.2px;">Additional Information</span>
<svg class="abs" style="left:1871.80px;top:842.40px;" width="11" height="9" viewBox="0 0 11 9"><g fill="none" stroke="#c3c6cc" stroke-width="1" stroke-linecap="round" stroke-linejoin="round"><path d="M3 8.2 V0.9 M0.6 3.3 L3 0.8 L5.4 3.3"/><path d="M8 0.8 V8.1 M5.6 5.7 L8 8.2 L10.4 5.7"/></g></svg>
<div class="abs" style="left:210px;top:865px;width:1674px;height:1px;background:#e3e7ef"></div>
<span class="t" style="top:877.09px;font-size:11px;left:219.30px;color:#4b5563;letter-spacing:0.32px;">265987854650</span>
<span class="t" style="top:877.09px;font-size:11px;left:334.80px;color:#4b5563;letter-spacing:0.05px;">Article 100</span>
<span class="t" style="top:877.09px;font-size:11px;left:438.60px;color:#4b5563;letter-spacing:0.1px;">3261846512320</span>
<div class="abs" style="left:1178px;top:880px;width:9px;height:9px;border-radius:5px;background:#22c08c"></div>
<span class="t" style="top:877.09px;font-size:11px;left:1246.20px;color:#4b5563;letter-spacing:0.42px;">8000009</span>
<span class="t" style="top:877.09px;font-size:11px;right:431.40px;color:#4b5563;">60</span>
<span class="t" style="top:877.09px;font-size:11px;right:306.00px;color:#4b5563;">0</span>
<span class="t" style="top:877.09px;font-size:11px;right:203.40px;color:#4b5563;">-60</span>
<div class="btn" style="left:1771px;top:325px;width:113px;height:30px"></div>
<svg class="abs" style="left:1782.00px;top:334.60px;" width="10" height="10.6" viewBox="0 0 10 10.6"><g fill="none" stroke="#3b4656" stroke-width="1.1" stroke-linecap="round" stroke-linejoin="round"><path d="M0.6 5.6 V8.8 Q0.6 10 1.8 10 H8.2 Q9.4 10 9.4 8.8 V5.6"/><path d="M5 7 V0.8 M2.6 3 L5 0.6 L7.4 3"/></g></svg>
<span class="t" style="top:334.99px;font-size:11px;left:1799.20px;color:#3b4656;letter-spacing:0.02px;">Excel menu</span>
<svg class="abs" style="left:1863.80px;top:337.30px;" width="8.4" height="5.7" viewBox="0 0 8.4 5.7"><path d="M1 1 L4.20 4.70 L7.40 1" fill="none" stroke="#3b4656" stroke-width="1.1" stroke-linecap="round" stroke-linejoin="round"/></svg>
<div class="abs" style="left:1772px;top:357px;width:118px;height:75px;background:#fff;border-radius:3px;box-shadow:0 4px 14px rgba(60,70,100,0.13)"></div>
<svg class="abs" style="left:1788.20px;top:373.20px;" width="10" height="10.6" viewBox="0 0 10 10.6"><g fill="none" stroke="#3b4656" stroke-width="1.1" stroke-linecap="round" stroke-linejoin="round"><path d="M0.6 5.6 V8.8 Q0.6 10 1.8 10 H8.2 Q9.4 10 9.4 8.8 V5.6"/><path d="M5 0.6 V6.8 M2.6 4.6 L5 7 L7.4 4.6"/></g></svg>
<span class="t" style="top:371.69px;font-size:11px;left:1805.40px;color:#4b5563;letter-spacing:0.08px;">Excel export</span>
<svg class="abs" style="left:1788.20px;top:407.00px;" width="10" height="10.6" viewBox="0 0 10 10.6"><g fill="none" stroke="#3b4656" stroke-width="1.1" stroke-linecap="round" stroke-linejoin="round"><path d="M0.6 5.6 V8.8 Q0.6 10 1.8 10 H8.2 Q9.4 10 9.4 8.8 V5.6"/><path d="M5 7 V0.8 M2.6 3 L5 0.6 L7.4 3"/></g></svg>
<span class="t" style="top:405.69px;font-size:11px;left:1805.40px;color:#4b5563;letter-spacing:0.08px;">Excel import</span>
</body>
</html>
